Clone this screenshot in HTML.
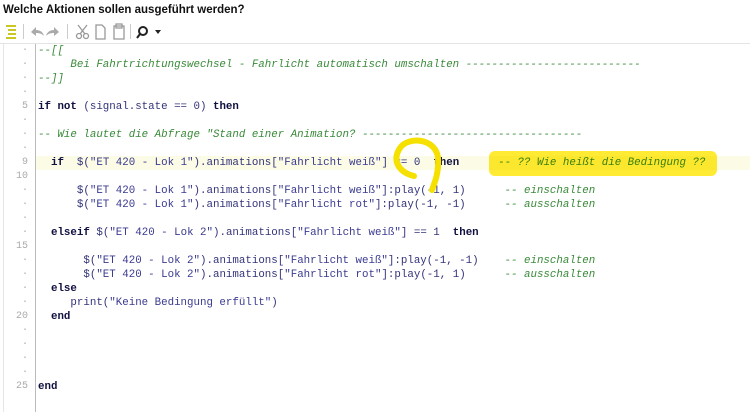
<!DOCTYPE html><html><head><meta charset="utf-8"><style>
body{margin:0;width:750px;height:412px;background:#fff;position:relative;overflow:hidden;font-family:"Liberation Sans",sans-serif}
.t{position:absolute;left:3px;top:4px;font-size:11.5px;font-weight:bold;color:#111}
.tb{position:absolute;top:22px;height:18px}
.hr{position:absolute;left:0;right:0;top:43px;height:1px;background:#e4e4e4}
.gut{position:absolute;left:35px;top:44px;width:1px;height:368px;background:#bbb}
.lb{position:absolute;left:3px;top:44px;width:1px;height:368px;background:#e6e6e6}
.ln{position:absolute;left:0;width:28px;text-align:right;font:10px "Liberation Mono",monospace;color:#aaa;line-height:14px}
.c{position:absolute;left:38px;font:10.8px "Liberation Mono",monospace;color:#33337a;line-height:14px;white-space:pre}
.k{font-weight:bold;color:#101040}
.s{color:#3a3a90}
.g{color:#3a8a3a;font-style:italic}
.hl{position:absolute;left:36px;right:0;top:156px;height:14px;background:#fbfbe6}
</style></head><body>
<div class="t">Welche Aktionen sollen ausgeführt werden?</div>
<svg class="tb" style="left:0" width="180" height="18">
<g stroke="#c8c820" stroke-width="2"><line x1="6" y1="4" x2="16" y2="4"/><line x1="8" y1="8" x2="16" y2="8"/><line x1="8" y1="12" x2="16" y2="12"/><line x1="6" y1="16" x2="16" y2="16"/></g>
<g stroke="#ccc"><line x1="23.5" y1="2" x2="23.5" y2="17"/><line x1="67.5" y1="2" x2="67.5" y2="17"/><line x1="130.5" y1="2" x2="130.5" y2="17"/></g>
<path d="M31 10 l5-5 v3 c4 0 7 2 8 6 c-2-2-4-3-8-3 v3z" fill="#aaa"/><path d="M59 10 l-5-5 v3 c-4 0-7 2-8 6 c2-2 4-3 8-3 v3z" fill="#aaa"/>
<g stroke="#999" fill="none" stroke-width="1.3"><circle cx="79" cy="14" r="2.5"/><circle cx="86" cy="14" r="2.5"/><line x1="80" y1="12" x2="87" y2="3"/><line x1="85" y1="12" x2="78" y2="3"/>
<path d="M96 3 h6 l3 3 v11 h-9z"/><path d="M114 4 h10 v13 h-10z M116 2 h6 v4 h-6z"/></g>
<circle cx="143" cy="9" r="4" stroke="#222" stroke-width="2" fill="none"/><line x1="140" y1="12" x2="137" y2="16" stroke="#222" stroke-width="2"/>
<path d="M155 8 h6 l-3 4z" fill="#222"/>
</svg>
<div class="hr"></div><div class="lb"></div>
<div class="hl"></div>
<div class="gut"></div>
<div class="ln" style="top:44px">·<br>·<br>·<br>·<br>5<br>·<br>·<br>·<br>9<br>10<br>·<br>·<br>·<br>·<br>15<br>·<br>·<br>·<br>·<br>20<br>·<br>·<br>·<br>·<br>25</div>
<div class="c" style="top:44px"><span class="g">--[[
     Bei Fahrtrichtungswechsel - Fahrlicht automatisch umschalten ---------------------------
--]]</span>

<span class="k">if not</span> (signal.state == 0) <span class="k">then</span>

<span class="g">-- Wie lautet die Abfrage "Stand einer Animation? ----------------------------------</span>

  <span class="k">if</span>  $(<span class="s">"ET 420 - Lok 1"</span>).animations[<span class="s">"Fahrlicht weiß"</span>] == 0  <span class="k">then</span>      <span class="g">-- ?? Wie heißt die Bedingung ??</span>

      $(<span class="s">"ET 420 - Lok 1"</span>).animations[<span class="s">"Fahrlicht weiß"</span>]:play(-1, 1)      <span class="g">-- einschalten</span>
      $(<span class="s">"ET 420 - Lok 1"</span>).animations[<span class="s">"Fahrlicht rot"</span>]:play(-1, -1)      <span class="g">-- ausschalten</span>

  <span class="k">elseif</span> $(<span class="s">"ET 420 - Lok 2"</span>).animations[<span class="s">"Fahrlicht weiß"</span>] == 1  <span class="k">then</span>

       $(<span class="s">"ET 420 - Lok 2"</span>).animations[<span class="s">"Fahrlicht weiß"</span>]:play(-1, -1)    <span class="g">-- einschalten</span>
       $(<span class="s">"ET 420 - Lok 2"</span>).animations[<span class="s">"Fahrlicht rot"</span>]:play(-1, 1)      <span class="g">-- ausschalten</span>
  <span class="k">else</span>
     print(<span class="s">"Keine Bedingung erfüllt"</span>)
  <span class="k">end</span>




<span class="k">end</span></div>
<div style="position:absolute;left:489px;top:151px;width:228px;height:25px;background:rgba(255,230,0,.8);border-radius:6px;mix-blend-mode:multiply"></div>
<svg style="position:absolute;left:380px;top:130px" width="70" height="70"><path d="M20 18 C28 6 56 8 58 28 C59 42 55 52 52 60 M20 18 C12 30 18 42 34 46" stroke="#f5e000" stroke-width="6" fill="none" stroke-linecap="round"/></svg>
</body></html>
